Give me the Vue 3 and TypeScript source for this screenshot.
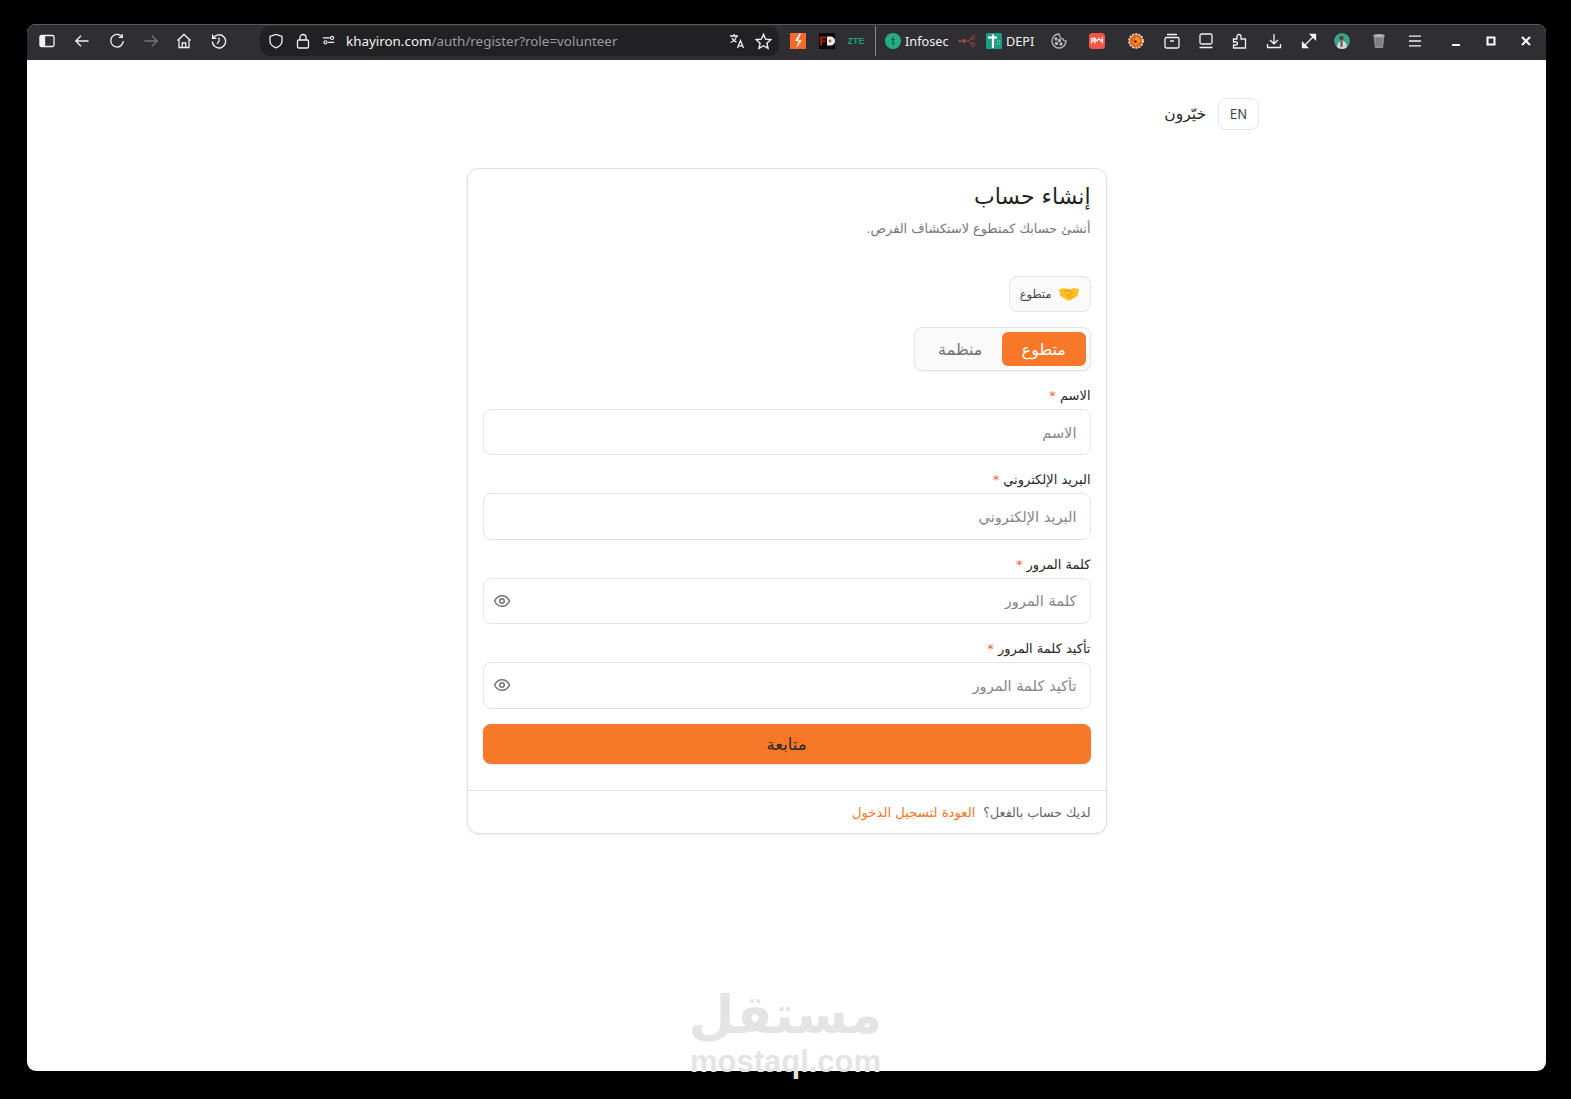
<script setup lang="ts">
import { ref } from "vue";

type Field = { label: string; type: string; eye?: boolean };

const fields: Field[] = [
  { label: "الاسم", type: "text" },
  { label: "البريد الإلكتروني", type: "email" },
  { label: "كلمة المرور", type: "password", eye: true },
  { label: "تأكيد كلمة المرور", type: "password", eye: true },
];

const role = ref("volunteer");
</script>

<template>
  <div class="screen">
    <div class="window">
      <div class="toolbar">
        <span class="slot w40">
          <svg class="ico" viewBox="0 0 16 16"><rect x="1" y="2.500" width="14" height="11" rx="1.500" /><rect x="1.500" y="3" width="4" height="10" fill="currentColor" /></svg>
        </span>
        <span class="slot w30">
          <svg class="ico" viewBox="0 0 16 16"><path d="M14.500 8H1.800M7 2.800 1.800 8 7 13.200" /></svg>
        </span>
        <span class="slot w40">
          <svg class="ico" viewBox="0 0 16 16"><path d="M12.600 3.400A6.300 6.300 0 1 0 14.300 8M13.200 1v3.400H9.800" /></svg>
        </span>
        <span class="slot w28 dim">
          <svg class="ico" viewBox="0 0 16 16"><path d="M1.500 8h12.700M9 2.800 14.200 8 9 13.200" /></svg>
        </span>
        <span class="slot w38">
          <svg class="ico" viewBox="0 0 16 16"><path d="M1.500 7.500 8 1.500l6.500 6M3 6.500V14.500h10V6.500M6.300 14.500V10h3.400v4.500" /></svg>
        </span>
        <span class="slot w32">
          <svg class="ico" viewBox="0 0 16 16"><path d="M2.200 5.200A6.600 6.600 0 1 1 1.400 8.400M1.600 1.600v3.800h3.800M8 4.500V8l-1.800 3" /></svg>
        </span>

        <div class="urlbar">
          <svg class="ico url-ico" viewBox="0 0 16 16"><path d="M8 1.400 14 3.400V8c0 3.400-2.600 5.600-6 6.800C4.600 13.600 2 11.400 2 8V3.400Z" /></svg>
          <svg class="ico url-ico" viewBox="0 0 16 16"><rect x="2.500" y="7" width="11" height="8" rx="1.200" /><path d="M5 7V4.500a3 3 0 0 1 6 0V7" /></svg>
          <svg class="ico url-ico small" viewBox="0 0 16 16"><circle cx="11.500" cy="4.500" r="1.800" /><circle cx="4" cy="9.500" r="1.800" /><path d="M1 4.500h8M14 9.500H7" /></svg>
          <span class="url"><b>khayiron.com</b>/auth/register?role=volunteer</span>
          <svg class="ico url-end" viewBox="0 0 16 16"><path d="M1 3h8M5 1v2M7.500 3C7 6 4.500 8.500 1.500 9.500M3 5c.8 2 2.400 3.400 4.500 4.200M8.500 15l3-7.500 3 7.500M9.500 12.800h4" /></svg>
          <svg class="ico url-end star" viewBox="0 0 16 16"><path d="m8 1.300 2 4.500 4.900.5-3.700 3.300 1.100 4.800L8 12l-4.300 2.400 1.100-4.800L1.100 6.300 6 5.800Z" /></svg>
        </div>

        <span class="slot w38">
          <svg class="fav" viewBox="0 0 16 16"><rect width="16" height="16" fill="#f4692c" /><path d="M9.500 0 5 8h3.500L6 16l6-9H8.500L11 0Z" fill="#fde8dc" /></svg>
        </span>
        <span class="slot w20">
          <svg class="fav" viewBox="0 0 16 16"><rect width="16" height="16" fill="#0a0a0a" /><path d="M1 3.500h6v2H3v2h3v2H3v3H1Z" fill="#a31d17" /><path d="M8 3.500h3.500a4.500 4.500 0 0 1 0 9H8Z" fill="#f1f1f1" /><circle cx="11" cy="8" r="1.400" fill="#d44a22" /></svg>
        </span>
        <span class="slot w38"><span class="zte">ZTE</span></span>
        <span class="sep"></span>
        <span class="slot bookmark infosec">
          <svg class="fav" viewBox="0 0 16 16"><circle cx="8" cy="8" r="8" fill="#27ab83" /><path d="M8 4v7.500h1.500M6.300 6.500h3.400" stroke="#12523f" fill="none" stroke-width="1.100" /></svg>
          <span>Infosec</span>
        </span>
        <span class="slot w34">
          <svg class="fav link" viewBox="0 0 18 12"><circle cx="2" cy="6" r="1.500" fill="#a34b3c" /><circle cx="6" cy="6" r="2" fill="#a34b3c" /><circle cx="15" cy="2.500" r="1.800" fill="none" stroke="#a34b3c" /><circle cx="15" cy="9.500" r="1.800" fill="none" stroke="#a34b3c" /><path d="M6 6h4.500L13.500 3M10.500 6l3 3" stroke="#a34b3c" fill="none" /></svg>
        </span>
        <span class="slot bookmark depi">
          <svg class="fav" viewBox="0 0 16 16"><rect width="16" height="16" rx="1.500" fill="#1f9d80" /><path d="M2 4.500h9M7 1.500V15" stroke="#fff" stroke-width="2.200" fill="none" /><path d="M11 8h3M11 11h3" stroke="#a4dccf" stroke-dasharray="1 1" fill="none" /></svg>
          <span>DEPI</span>
        </span>
        <span class="slot w38 soft">
          <svg class="ico" viewBox="0 0 16 16"><path d="M8 1a7 7 0 1 0 7 7c-1.500.3-2.800-.5-3-2-1.600.2-3-1-3-2.600C8.300 3 7.800 2 8 1Z" /><circle cx="5" cy="6" r="1" fill="currentColor" /><circle cx="8.500" cy="7.500" r="1" fill="currentColor" /><circle cx="5.500" cy="10.500" r="1" fill="currentColor" /><circle cx="10" cy="11" r="1" fill="currentColor" /></svg>
        </span>
        <span class="slot w38">
          <svg class="fav" viewBox="0 0 16 16"><rect width="16" height="16" rx="3.500" fill="#f4554a" /><path d="M2.500 10.500V5.500h2.500v2.500H3M6 10.500V5.500L8 8l2-2.500 2 2.500 1.500-2.500v5" stroke="#fde5e0" stroke-width="1.300" fill="none" /></svg>
        </span>
        <span class="slot w40">
          <svg class="fav" viewBox="0 0 16 16"><circle cx="8" cy="8" r="7" fill="#e8691c" stroke="#efe6dc" stroke-width="1.600" stroke-dasharray="2 1.200" /><path d="M5 9 9 3.500l1.500 3L12.500 7 8 12.500Z" fill="#f9a23b" /><circle cx="7.500" cy="8.500" r="1.500" fill="#4b2a12" /></svg>
        </span>
        <span class="slot w32">
          <svg class="ico" viewBox="0 0 16 16"><path d="M3 1.500h10" /><rect x="1" y="4.500" width="14" height="10.500" rx="1.500" /><path d="M6 8h4" /></svg>
        </span>
        <span class="slot w36">
          <svg class="ico" viewBox="0 0 16 16"><rect x="2" y="1" width="12" height="10" rx="1.500" /><path d="M1.500 14.500h13" /></svg>
        </span>
        <span class="slot w32">
          <svg class="ico" viewBox="0 0 16 16"><path d="M1.500 6H5V3.500a2 2 0 0 1 4 0V6h4.500v9h-12v-3H4a1.500 1.500 0 0 0 0-3H1.500Z" /></svg>
        </span>
        <span class="slot w36">
          <svg class="ico" viewBox="0 0 16 16"><path d="M8 1v9.500M4 7l4 3.800L12 7M1.500 11v3.500h13V11" /></svg>
        </span>
        <span class="slot w34">
          <svg class="ico" viewBox="0 0 16 16"><path d="M2.500 13.500 13.500 2.500" /><path d="M9.500 1.500h5v5ZM6.500 14.500h-5v-5Z" fill="currentColor" /></svg>
        </span>
        <span class="slot w32">
          <svg class="fav avatar" viewBox="0 0 16 16"><circle cx="8" cy="8" r="8" fill="#3aa48c" /><path d="M3 16c0-6 2-8 5-8s5 2 5 8Z" fill="#d5d5d5" /><circle cx="7.500" cy="5" r="2.200" fill="#5a4236" /><path d="M6.500 8h2v6h-2Z" fill="#6b4f42" /></svg>
        </span>
        <span class="slot w42">
          <svg class="fav" viewBox="0 0 16 16"><path d="M2.500 2.500h11L12 15H4Z" fill="#8f8f8f" /><ellipse cx="8" cy="2.500" rx="5.500" ry="1.500" fill="#b5b5b5" /><path d="M5.500 5l.6 8M8 5v8M10.500 5l-.6 8" stroke="#6e6e6e" fill="none" /></svg>
        </span>
        <span class="slot w30">
          <svg class="ico" viewBox="0 0 16 16"><path d="M2 3.200h12M2 8h12M2 12.800h12" /></svg>
        </span>
        <span class="slot w52">
          <svg class="ctl" viewBox="0 0 12 12"><path d="M2 10h8" /></svg>
        </span>
        <span class="slot w18">
          <svg class="ctl" viewBox="0 0 12 12"><rect x="2.500" y="2.500" width="7" height="7" /></svg>
        </span>
        <span class="slot closebtn">
          <svg class="ctl" viewBox="0 0 12 12"><path d="m2 2 8 8M10 2l-8 8" /></svg>
        </span>
      </div>

      <main class="page" dir="rtl">
        <header class="topbar">
          <button class="lang" type="button">EN</button>
          <span class="brand">خيّرون</span>
        </header>

        <section class="card">
          <div class="card-body">
            <h1>إنشاء حساب</h1>
            <p class="sub">أنشئ حسابك كمتطوع لاستكشاف الفرص.</p>

            <div class="chip">
              <svg class="hands" viewBox="0 0 20 14">
                <path d="M0 2.500 5 1l5 1.500L15 1l5 1.500-1.500 6.500L11 13.500H9L1.500 9Z" fill="#fbbf24" />
                <path d="M6 4.500 10 3l4 3.500M8 8l2.500 2.500M10.500 7l2.500 2.500" stroke="#e0611a" stroke-width="1" stroke-dasharray="1.500 1" fill="none" />
              </svg>
              <span>متطوع</span>
            </div>

            <div class="segment">
              <button type="button" :class="{ on: role === 'volunteer' }" @click="role = 'volunteer'">متطوع</button>
              <button type="button" :class="{ on: role === 'org' }" @click="role = 'org'">منظمة</button>
            </div>

            <form class="form" @submit.prevent>
              <label v-for="f in fields" :key="f.label" class="field">
                <span class="label">{{ f.label }} <i>*</i></span>
                <span class="control">
                  <input :type="f.type" :placeholder="f.label" />
                  <svg v-if="f.eye" class="eye" viewBox="0 0 24 24">
                    <path d="M2 12s3.600-7 10-7 10 7 10 7-3.600 7-10 7-10-7-10-7Z" />
                    <circle cx="12" cy="12" r="3" />
                  </svg>
                </span>
              </label>
              <button class="submit" type="submit">متابعة</button>
            </form>
          </div>

          <footer class="card-foot">
            <span>لديك حساب بالفعل؟</span>
            <a href="#">العودة لتسجيل الدخول</a>
          </footer>
        </section>
      </main>
    </div>

    <div class="watermark" aria-hidden="true">
      <span class="wm-ar">مستقل</span>
      <span class="wm-en">mostaql.com</span>
    </div>
  </div>
</template>

<style>
html,
body {
  margin: 0;
  background: #000;
}
</style>

<style scoped>
.screen {
  position: relative;
  height: 1099px;
  box-sizing: border-box;
  padding: 24px 25px 28px 27px;
  background: #000;
  overflow: hidden;
  font-family: "DejaVu Sans", sans-serif;
}

.window {
  height: 100%;
  display: flex;
  flex-direction: column;
  background: #fff;
  border-radius: 9px;
  overflow: hidden;
}

/* browser chrome */
.toolbar {
  flex: none;
  height: 36px;
  box-sizing: border-box;
  padding-bottom: 3px;
  display: flex;
  align-items: center;
  background: #2f2f33;
  border-top: 1px solid #5a5a5e;
  color: #f2f2f2;
  font-family: "Noto Sans", sans-serif;
  font-size: 12.700px;
}

.slot {
  flex: none;
  display: flex;
  align-items: center;
  justify-content: center;
  height: 100%;
}
.w18 { width: 18px; }
.w20 { width: 20px; }
.w28 { width: 28px; }
.w30 { width: 30px; }
.w32 { width: 32px; }
.w34 { width: 34px; }
.w36 { width: 36px; }
.w38 { width: 38px; }
.w40 { width: 40px; }
.w42 { width: 42px; }
.w52 { width: 52px; }
.dim { color: #77777b; }
.soft { color: #b9b9bb; }

.ico {
  width: 16px;
  height: 16px;
  fill: none;
  stroke: currentColor;
  stroke-width: 1.300;
}
.fav {
  width: 16px;
  height: 16px;
}
.fav.link {
  width: 18px;
  height: 12px;
}
.avatar {
  border-radius: 50%;
}
.ctl {
  width: 12px;
  height: 12px;
  fill: none;
  stroke: #fff;
  stroke-width: 2;
}

.urlbar {
  flex: 1;
  min-width: 0;
  height: 30px;
  margin-left: 25px;
  padding: 0 7px 0 8px;
  display: flex;
  align-items: center;
  border-radius: 10px;
  background: #212124;
}
.url-ico {
  margin-right: 11px;
}
.url-ico.small {
  width: 14px;
  height: 14px;
  margin-right: 10px;
}
.url {
  flex: 1;
  white-space: nowrap;
  color: #9c9ca0;
  font-size: 13.400px;
}
.url b {
  color: #f2f2f2;
  font-weight: 400;
}
.url-end {
  margin-left: 10px;
}
.star {
  width: 17px;
  height: 17px;
}

.zte {
  color: #1f9d80;
  font-size: 9px;
  font-weight: 700;
  font-family: "Liberation Sans", sans-serif;
}
.sep {
  flex: none;
  width: 1px;
  height: 30px;
  background: #8c8c90;
}
.bookmark {
  gap: 4px;
  justify-content: flex-start;
}
.infosec {
  width: 74px;
  padding-left: 9px;
  box-sizing: border-box;
}
.depi {
  width: 56px;
  padding-left: 2px;
  box-sizing: border-box;
}
.closebtn {
  width: 46px;
  padding-left: 6px;
  box-sizing: border-box;
}

/* page */
.page {
  flex: 1;
  display: flex;
  flex-direction: column;
  align-items: center;
  padding-top: 38px;
  color: #27272a;
}

.topbar {
  width: 945px;
  display: flex;
  align-items: center;
  gap: 12px;
}
.lang {
  width: 41px;
  height: 32px;
  padding: 0;
  background: #fff;
  border: 1px solid #e4e4e7;
  border-radius: 8px;
  color: #3f3f46;
  font: 400 12.500px "Inter", sans-serif;
}
.brand {
  font-size: 15.500px;
  color: #27272a;
}

.card {
  width: 640px;
  box-sizing: border-box;
  margin-top: 38px;
  background: #fff;
  border: 1px solid #e0e0e3;
  border-radius: 12px;
  box-shadow: 0 1px 3px rgba(0, 0, 0, 0.08);
}
.card-body {
  padding: 14px 15px 26px;
}

h1 {
  margin: 0;
  font-size: 22px;
  line-height: 28px;
  font-weight: 400;
  color: #1f1f23;
}
.sub {
  margin: 8px 0 0;
  font-size: 12.850px;
  line-height: 20px;
  color: #77777f;
}

.chip {
  width: 82px;
  height: 36px;
  box-sizing: border-box;
  margin-top: 37px;
  display: flex;
  align-items: center;
  gap: 7px;
  padding: 0 11px;
  background: #fafafa;
  border: 1px solid #e4e4e7;
  border-radius: 8px;
  font-size: 11.500px;
  color: #3f3f46;
}
.hands {
  flex: none;
  width: 20px;
  height: 14px;
}

.segment {
  width: 177px;
  height: 44px;
  box-sizing: border-box;
  margin-top: 15px;
  padding: 4px;
  display: flex;
  background: #fafafa;
  border: 1px solid #e4e4e7;
  border-radius: 8px;
  box-shadow: 0 1px 2px rgba(0, 0, 0, 0.06);
}
.segment button {
  flex: 1;
  padding: 0;
  border: 0;
  border-radius: 6px;
  background: transparent;
  color: #71717a;
  font: 400 16px "DejaVu Sans", sans-serif;
}
.segment button.on {
  background: #f67828;
  color: #fff;
}

.form {
  margin-top: 14px;
  display: flex;
  flex-direction: column;
  gap: 14px;
}
.field {
  display: flex;
  flex-direction: column;
  gap: 4px;
}
.label {
  height: 20px;
  line-height: 22px;
  font-size: 13px;
  color: #27272a;
}
.label i {
  font-style: normal;
  color: #f0603c;
}
.control {
  position: relative;
  display: block;
}
.control input {
  display: block;
  width: 100%;
  height: 46.400px;
  box-sizing: border-box;
  padding: 0 13px 0 14px;
  background: #fff;
  border: 1px solid #e4e4e7;
  border-radius: 8px;
  outline: none;
  font: 400 14.600px "DejaVu Sans", sans-serif;
  color: #27272a;
}
.control input::placeholder {
  color: #85858c;
}
.eye {
  position: absolute;
  left: 10px;
  top: 14px;
  width: 18px;
  height: 18px;
  fill: none;
  stroke: #71717a;
  stroke-width: 2;
}
.submit {
  height: 40px;
  margin-top: 1.500px;
  padding: 0;
  border: 0;
  border-radius: 8px;
  background: #f67828;
  color: #27272a;
  font: 400 16.500px "DejaVu Sans", sans-serif;
  box-shadow: 0 1px 2px rgba(0, 0, 0, 0.1);
}

.card-foot {
  height: 43px;
  box-sizing: border-box;
  padding: 0 15px;
  display: flex;
  align-items: center;
  gap: 8px;
  border-top: 1px solid #e4e4e7;
  font-size: 12.600px;
  color: #63636b;
}
.card-foot a {
  font-size: 13.200px;
  color: #f67828;
  text-decoration: none;
}

/* mostaql stamp over the screenshot */
.watermark {
  position: absolute;
  left: 0;
  right: 0;
  top: 982px;
  display: flex;
  flex-direction: column;
  align-items: center;
  color: #e4e4e4;
  pointer-events: none;
}
.wm-ar {
  font-size: 53px;
  line-height: 66px;
  font-weight: 700;
}
.wm-en {
  font-family: "Liberation Sans", sans-serif;
  font-size: 31px;
  line-height: 30px;
  font-weight: 700;
  margin-top: -1px;
}
</style>
